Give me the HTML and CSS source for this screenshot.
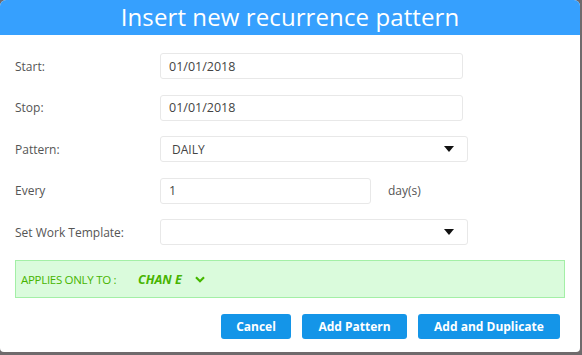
FILE: index.html
```html
<!DOCTYPE html>
<html lang="en">
<head>
    <meta charset="UTF-8">
    <meta name="viewport" content="width=device-width, initial-scale=1.0">
    <title>Insert new recurrence pattern</title>
    <link rel="stylesheet" href="styles.css">
</head>
<body>

    <div class="modal">
        <div class="modal-header">Insert new recurrence pattern</div>

        <div class="modal-body">
            <div class="form-row">
                <label class="form-label">Start:</label>
                <input class="field field-wide" type="text" value="01/01/2018" />
            </div>

            <div class="form-row">
                <label class="form-label">Stop:</label>
                <input class="field field-wide" type="text" value="01/01/2018" />
            </div>

            <div class="form-row">
                <label class="form-label">Pattern:</label>
                <div class="field field-select">
                    <span class="select-value">DAILY</span>
                    <span class="caret"></span>
                </div>
            </div>

            <div class="form-row">
                <label class="form-label">Every</label>
                <input class="field field-short" type="text" value="1" />
                <span class="unit">day(s)</span>
            </div>

            <div class="form-row">
                <label class="form-label">Set Work Template:</label>
                <div class="field field-select">
                    <span class="select-value"></span>
                    <span class="caret"></span>
                </div>
            </div>

            <div class="applies">
                <span class="applies-label">APPLIES ONLY TO :</span>
                <span class="applies-value">CHAN E</span>
                <svg class="chevron" width="10" height="7" viewBox="0 0 10 7">
                    <path d="M1 1.2 L5 5.2 L9 1.2" fill="none" stroke="#45b800" stroke-width="2.2" />
                </svg>
            </div>

            <div class="actions">
                <button class="btn btn-cancel">Cancel</button>
                <button class="btn btn-add">Add Pattern</button>
                <button class="btn btn-dup">Add and Duplicate</button>
            </div>
        </div>
    </div>

</body>
</html>
```

FILE: styles.css
```css
body {
    margin: 0;
    padding: 0;
    background-color: #6f6a6c;
    font-family: "Open Sans", Arial, sans-serif;
}

.modal {
    width: 580px;
    height: 352px;
    background: white;
    border-radius: 6px 6px 4px 4px;
    overflow: hidden;
}

.modal-header {
    height: 35px;
    line-height: 34px;
    background-color: #36a0fe;
    color: white;
    text-align: center;
    font-size: 24px;
    letter-spacing: 0.1px;
}

.modal-body {
    padding: 18px 15px 0 15px;
}

.form-row {
    display: flex;
    align-items: center;
    height: 26px;
    margin-bottom: 15.5px;
}

.form-label {
    width: 145px;
    font-size: 12px;
    color: #555;
}

.field {
    box-sizing: border-box;
    height: 26px;
    border: 1px solid #e8e8e8;
    border-radius: 3px;
    background: white;
    font-family: "Open Sans", Arial, sans-serif;
    font-size: 12.5px;
    color: #444;
    padding: 0 8px;
    margin: 0;
    outline: none;
}

.field-wide {
    width: 303px;
}

.field-short {
    width: 211px;
}

.field-select {
    width: 308px;
    display: flex;
    align-items: center;
    justify-content: space-between;
    padding: 0 13px 0 11px;
    font-size: 12px;
}

.caret {
    width: 0;
    height: 0;
    border-left: 5px solid transparent;
    border-right: 5px solid transparent;
    border-top: 6px solid #111;
}

.unit {
    margin-left: 17px;
    font-size: 12px;
    color: #555;
}

.applies {
    box-sizing: border-box;
    height: 38px;
    margin-top: -0.5px;
    display: flex;
    align-items: center;
    padding-left: 5px;
    background-color: #dafbdc;
    border: 1px solid #a3efa6;
    color: #47b400;
}

.applies-label {
    font-size: 11.5px;
    letter-spacing: -0.3px;
    width: 117px;
}

.applies-value {
    font-size: 12.5px;
    font-weight: bold;
    font-style: italic;
    margin-right: 13px;
}

.chevron {
    display: block;
}

.actions {
    display: flex;
    justify-content: flex-end;
    gap: 11px;
    margin-top: 16px;
    padding-right: 5px;
}

.btn {
    height: 25px;
    border: none;
    border-radius: 3px;
    background-color: #1495e8;
    color: white;
    font-family: "Open Sans", Arial, sans-serif;
    font-size: 12px;
    font-weight: bold;
    cursor: pointer;
    padding: 0;
}

.btn-cancel {
    width: 70px;
}

.btn-add {
    width: 105px;
}

.btn-dup {
    width: 142px;
}
```
